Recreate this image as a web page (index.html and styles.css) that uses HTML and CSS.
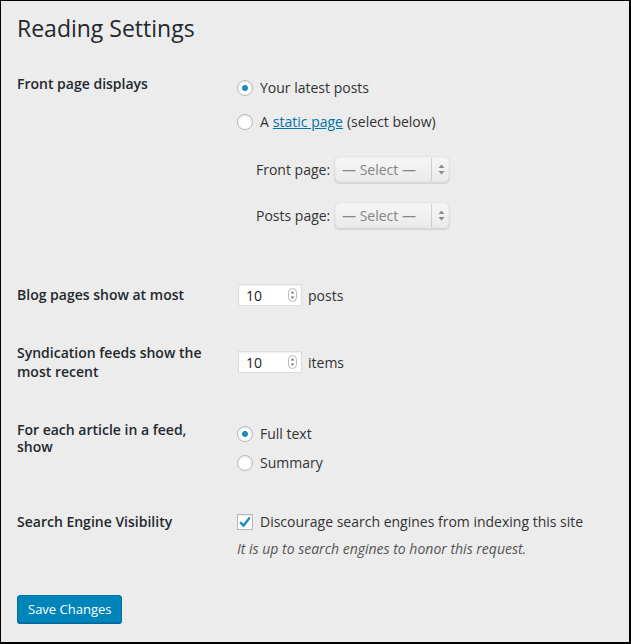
FILE: index.html
```html
<!DOCTYPE html>
<html lang="en">

<head>
    <meta charset="UTF-8">
    <title>Reading Settings</title>
    <link rel="stylesheet" href="styles.css">
</head>

<body>
    <div class="frame">
        <div class="wrap">
            <h1>Reading Settings</h1>

            <!-- Front page -->
            <div class="row row-front">
                <div class="label">Front page displays</div>
                <div class="field">
                    <label class="option"><input type="radio" name="show_on_front" checked> Your latest posts</label>
                    <label class="option option-gap"><input type="radio" name="show_on_front"> A <a href="#">static page</a> (select below)</label>
                    <div class="pick pick-first">
                        <span class="pick-label">Front page:</span>
                        <span class="select"><span class="select-text">— Select —</span><span class="select-arrows"><svg width="7" height="11" viewBox="0 0 7 11"><path d="M3.5 0.5L6.5 4H0.5z M3.5 10.5L6.5 7H0.5z" fill="#8a8a8a"/></svg></span></span>
                    </div>
                    <div class="pick pick-second">
                        <span class="pick-label">Posts page:</span>
                        <span class="select"><span class="select-text">— Select —</span><span class="select-arrows"><svg width="7" height="11" viewBox="0 0 7 11"><path d="M3.5 0.5L6.5 4H0.5z M3.5 10.5L6.5 7H0.5z" fill="#8a8a8a"/></svg></span></span>
                    </div>
                </div>
            </div>

            <!-- Blog pages -->
            <div class="row row-blog">
                <div class="label label-num">Blog pages show at most</div>
                <div class="field inline">
                    <span class="number"><span>10</span><span class="spin"><svg width="9" height="14" viewBox="0 0 9 14"><rect x="0.5" y="0.5" width="8" height="13" rx="4" fill="#fff" stroke="#b8b8b8"/><path d="M4.5 3L6.3 5.6H2.7z M4.5 11L6.3 8.4H2.7z" fill="#777"/></svg></span></span>
                    <span class="unit">posts</span>
                </div>
            </div>

            <!-- Syndication -->
            <div class="row row-feed">
                <div class="label">Syndication feeds show the most recent</div>
                <div class="field inline field-feed">
                    <span class="number"><span>10</span><span class="spin"><svg width="9" height="14" viewBox="0 0 9 14"><rect x="0.5" y="0.5" width="8" height="13" rx="4" fill="#fff" stroke="#b8b8b8"/><path d="M4.5 3L6.3 5.6H2.7z M4.5 11L6.3 8.4H2.7z" fill="#777"/></svg></span></span>
                    <span class="unit">items</span>
                </div>
            </div>

            <!-- Feed article -->
            <div class="row row-article">
                <div class="label">For each article in a feed, show</div>
                <div class="field field-article">
                    <label class="option"><input type="radio" name="rss_use_excerpt" checked> Full text</label>
                    <label class="option option-small-gap"><input type="radio" name="rss_use_excerpt"> Summary</label>
                </div>
            </div>

            <!-- Search engines -->
            <div class="row row-search">
                <div class="label">Search Engine Visibility</div>
                <div class="field">
                    <label class="option"><span class="checkbox"><svg width="14" height="14" viewBox="0 0 14 14"><path d="M2.2 7.2L5.6 10.6L11.8 2.6" fill="none" stroke="#1e8cbe" stroke-width="2.4"/></svg></span> Discourage search engines from indexing this site</label>
                    <p class="description">It is up to search engines to honor this request.</p>
                </div>
            </div>

            <button class="button-primary">Save Changes</button>
        </div>
    </div>
</body>

</html>
```

FILE: styles.css
```css
body {
    margin: 0;
    font-family: "Open Sans", "Liberation Sans", sans-serif;
    color: #333;
}

.frame {
    box-sizing: border-box;
    width: 631px;
    height: 644px;
    background: #ececec;
    border-style: solid;
    border-color: #000;
    border-width: 1px 2px 2px 1px;
}

.wrap {
    padding-left: 16px;
}

h1 {
    margin: 12px 0 0;
    font-size: 23px;
    font-weight: 400;
    line-height: 30px;
    color: #23282d;
}

.row {
    display: flex;
}

.label {
    width: 220px;
    flex-shrink: 0;
    font-size: 14px;
    font-weight: 600;
    line-height: 19px;
    color: #23282d;
    padding-right: 24px;
    box-sizing: border-box;
}

.field {
    font-size: 14px;
    line-height: 19px;
}

.option {
    display: flex;
    align-items: center;
    height: 19px;
}

.option input[type="radio"] {
    appearance: none;
    -webkit-appearance: none;
    width: 16px;
    height: 16px;
    margin: 0 7px 0 0;
    border: 1px solid #b4b9be;
    border-radius: 50%;
    background: #fff;
    box-shadow: inset 0 1px 2px rgba(0, 0, 0, 0.1);
    box-sizing: border-box;
    flex-shrink: 0;
}

.option input[type="radio"]:checked {
    background: radial-gradient(circle, #1e8cbe 0, #1e8cbe 2.6px, #fff 3.4px);
}

.option a {
    color: #0073aa;
    margin: 0 4px;
}

.option-gap {
    margin-top: 15px;
}

.option-small-gap {
    margin-top: 10px;
}

/* front page */
.row-front {
    margin-top: 31px;
}

.row-front .field {
    padding-top: 4px;
}

.pick {
    display: flex;
    align-items: center;
    padding-left: 19px;
}

.pick-first {
    margin-top: 25px;
}

.pick-second {
    margin-top: 19px;
}

.pick-label {
    width: 78px;
    color: #333;
}

.select {
    display: flex;
    align-items: center;
    width: 116px;
    height: 27px;
    box-sizing: border-box;
    border-radius: 5px;
    background: linear-gradient(#f7f7f7, #e9e9e9);
    box-shadow: inset 0 0 3px rgba(0, 0, 0, 0.18), 0 1px 1px rgba(0, 0, 0, 0.12);
}

.select-text {
    width: 98px;
    padding-left: 8px;
    box-sizing: border-box;
    color: #858585;
    border-right: 1px solid #cfcfcf;
    height: 23px;
    line-height: 23px;
}

.select-arrows {
    display: flex;
    justify-content: center;
    flex: 1;
}

/* numbers */
.row-blog {
    margin-top: 55px;
}

.label-num {
    padding-top: 1px;
}

.inline {
    display: flex;
    align-items: center;
    height: 22px;
}

.number {
    display: flex;
    align-items: center;
    justify-content: space-between;
    width: 64px;
    height: 22px;
    margin-left: 1px;
    padding: 0 4px 0 7px;
    box-sizing: border-box;
    background: #fff;
    border: 1px solid #ddd;
    box-shadow: inset 0 1px 2px rgba(0, 0, 0, 0.07);
    color: #222;
}

.spin {
    display: flex;
}

.unit {
    margin-left: 6px;
}

.row-feed {
    margin-top: 37px;
}

.field-feed {
    margin-top: 8px;
}

.row-article {
    margin-top: 40px;
}

.row-article .label {
    line-height: 17px;
}

.field-article {
    padding-top: 3px;
}

/* search */
.row-search {
    margin-top: 40px;
}

.checkbox {
    display: flex;
    align-items: center;
    justify-content: center;
    width: 16px;
    height: 16px;
    margin-right: 7px;
    box-sizing: border-box;
    border: 1px solid #b4b9be;
    background: #fff;
    box-shadow: inset 0 1px 2px rgba(0, 0, 0, 0.1);
}

.description {
    margin: 8px 0 0;
    font-size: 14px;
    font-style: italic;
    color: #555;
}

.button-primary {
    display: block;
    margin-top: 37px;
    height: 28px;
    padding: 0 10px;
    font-family: "Open Sans", "Liberation Sans", sans-serif;
    font-size: 13px;
    line-height: 26px;
    color: #fff;
    background: #0085ba;
    border: 1px solid #0073aa;
    border-radius: 3px;
    box-shadow: 0 1px 0 #006799;
}
```
